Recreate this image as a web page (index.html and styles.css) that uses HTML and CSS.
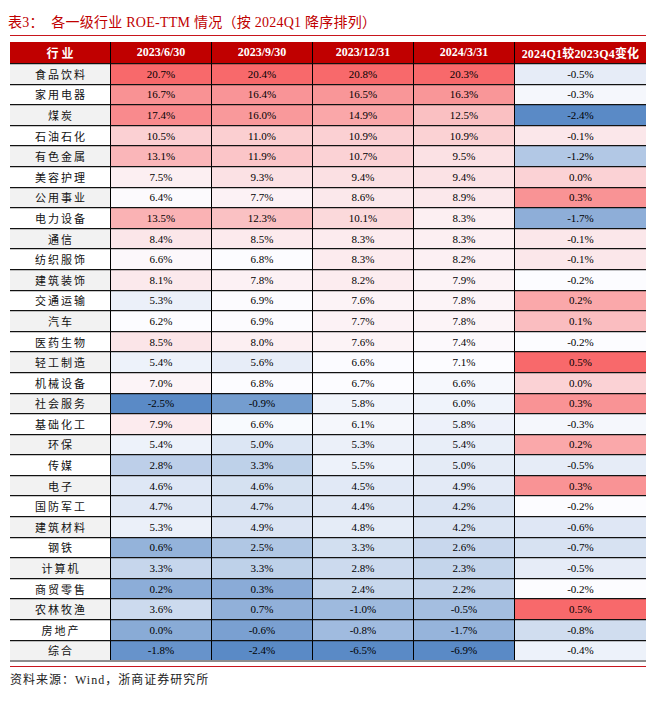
FILE: index.html
```html
<!DOCTYPE html>
<html lang="zh-CN">
<head>
<meta charset="utf-8">
<title>各一级行业 ROE-TTM 情况</title>
<link rel="stylesheet" href="styles.css">
</head>
<body>
<div class="title">表3：&nbsp;&nbsp;各一级行业 ROE-TTM 情况（按 2024Q1 降序排列）</div>
<div class="rule"></div>
<table class="roe" id="roe">
<thead>
<tr><th class="ind">行业</th><th>2023/6/30</th><th>2023/9/30</th><th>2023/12/31</th><th>2024/3/31</th><th class="chg">2024Q1较2023Q4变化</th></tr>
</thead>
<tbody>
<tr><td class="ind">食品饮料</td><td>20.7%</td><td>20.4%</td><td>20.8%</td><td>20.3%</td><td>-0.5%</td></tr>
<tr><td class="ind">家用电器</td><td>16.7%</td><td>16.4%</td><td>16.5%</td><td>16.3%</td><td>-0.3%</td></tr>
<tr><td class="ind">煤炭</td><td>17.4%</td><td>16.0%</td><td>14.9%</td><td>12.5%</td><td>-2.4%</td></tr>
<tr><td class="ind">石油石化</td><td>10.5%</td><td>11.0%</td><td>10.9%</td><td>10.9%</td><td>-0.1%</td></tr>
<tr><td class="ind">有色金属</td><td>13.1%</td><td>11.9%</td><td>10.7%</td><td>9.5%</td><td>-1.2%</td></tr>
<tr><td class="ind">美容护理</td><td>7.5%</td><td>9.3%</td><td>9.4%</td><td>9.4%</td><td>0.0%</td></tr>
<tr><td class="ind">公用事业</td><td>6.4%</td><td>7.7%</td><td>8.6%</td><td>8.9%</td><td>0.3%</td></tr>
<tr><td class="ind">电力设备</td><td>13.5%</td><td>12.3%</td><td>10.1%</td><td>8.3%</td><td>-1.7%</td></tr>
<tr><td class="ind">通信</td><td>8.4%</td><td>8.5%</td><td>8.3%</td><td>8.3%</td><td>-0.1%</td></tr>
<tr><td class="ind">纺织服饰</td><td>6.6%</td><td>6.8%</td><td>8.3%</td><td>8.2%</td><td>-0.1%</td></tr>
<tr><td class="ind">建筑装饰</td><td>8.1%</td><td>7.8%</td><td>8.2%</td><td>7.9%</td><td>-0.2%</td></tr>
<tr><td class="ind">交通运输</td><td>5.3%</td><td>6.9%</td><td>7.6%</td><td>7.8%</td><td>0.2%</td></tr>
<tr><td class="ind">汽车</td><td>6.2%</td><td>6.9%</td><td>7.7%</td><td>7.8%</td><td>0.1%</td></tr>
<tr><td class="ind">医药生物</td><td>8.5%</td><td>8.0%</td><td>7.6%</td><td>7.4%</td><td>-0.2%</td></tr>
<tr><td class="ind">轻工制造</td><td>5.4%</td><td>5.6%</td><td>6.6%</td><td>7.1%</td><td>0.5%</td></tr>
<tr><td class="ind">机械设备</td><td>7.0%</td><td>6.8%</td><td>6.7%</td><td>6.6%</td><td>0.0%</td></tr>
<tr><td class="ind">社会服务</td><td>-2.5%</td><td>-0.9%</td><td>5.8%</td><td>6.0%</td><td>0.3%</td></tr>
<tr><td class="ind">基础化工</td><td>7.9%</td><td>6.6%</td><td>6.1%</td><td>5.8%</td><td>-0.3%</td></tr>
<tr><td class="ind">环保</td><td>5.4%</td><td>5.0%</td><td>5.3%</td><td>5.4%</td><td>0.2%</td></tr>
<tr><td class="ind">传媒</td><td>2.8%</td><td>3.3%</td><td>5.5%</td><td>5.0%</td><td>-0.5%</td></tr>
<tr><td class="ind">电子</td><td>4.6%</td><td>4.6%</td><td>4.5%</td><td>4.9%</td><td>0.3%</td></tr>
<tr><td class="ind">国防军工</td><td>4.7%</td><td>4.7%</td><td>4.4%</td><td>4.2%</td><td>-0.2%</td></tr>
<tr><td class="ind">建筑材料</td><td>5.3%</td><td>4.9%</td><td>4.8%</td><td>4.2%</td><td>-0.6%</td></tr>
<tr><td class="ind">钢铁</td><td>0.6%</td><td>2.5%</td><td>3.3%</td><td>2.6%</td><td>-0.7%</td></tr>
<tr><td class="ind">计算机</td><td>3.3%</td><td>3.3%</td><td>2.8%</td><td>2.3%</td><td>-0.5%</td></tr>
<tr><td class="ind">商贸零售</td><td>0.2%</td><td>0.3%</td><td>2.4%</td><td>2.2%</td><td>-0.2%</td></tr>
<tr><td class="ind">农林牧渔</td><td>3.6%</td><td>0.7%</td><td>-1.0%</td><td>-0.5%</td><td>0.5%</td></tr>
<tr><td class="ind">房地产</td><td>0.0%</td><td>-0.6%</td><td>-0.8%</td><td>-1.7%</td><td>-0.8%</td></tr>
<tr><td class="ind">综合</td><td>-1.8%</td><td>-2.4%</td><td>-6.5%</td><td>-6.9%</td><td>-0.4%</td></tr>
</tbody>
</table>
<div class="rule rule-bottom"></div>
<div class="source">资料来源：Wind，浙商证券研究所</div>
<script src="script.js"></script>
</body>
</html>
```

FILE: styles.css
```css
html, body {
  margin: 0;
  padding: 0;
  background: #ffffff;
}

body {
  font-family: "Liberation Serif", "Noto Sans CJK SC", serif;
  color: #000;
}

.title {
  padding: 14px 0 3px 8px;
  height: 18px;
  line-height: 18px;
  font-size: 14px;
  letter-spacing: 0.25px;
  color: #c00000;
  white-space: nowrap;
}

.rule {
  margin-left: 10px;
  height: 1px;
  background: #c8161d;
}

.roe {
  margin: 6px 0 0 10px;
  width: 636px;
  border-collapse: separate;
  border-spacing: 0;
  table-layout: fixed;
  border-bottom: 2px solid #8c8c8c;
}

.roe th,
.roe td {
  padding: 0;
  text-align: center;
  vertical-align: middle;
  white-space: nowrap;
}

.roe th {
  height: 21px;
  background: #c00000;
  color: #fff;
  font-weight: bold;
  font-size: 12px;
  border-left: 1px solid #000;
}

.roe th.ind {
  width: 100px;
  border-left: 0;
  letter-spacing: 3px;
  text-indent: 3px;
}

.roe th.chg {
  width: 131px;
  letter-spacing: 0.2px;
}

.roe tbody tr {
  height: 20.6px;
}

.roe td {
  font-size: 11px;
  border-top: 1px solid #111;
  border-left: 1px solid #000;
  box-shadow: inset 0 1px 0 rgba(0, 0, 0, 0.22);
}

.roe td.ind {
  border-left: 0;
  letter-spacing: 2px;
  text-indent: 2px;
  font-size: 11px;
  color: #111;
}

.roe tbody tr:nth-child(odd) td.ind {
  background: #f2f2f2;
}

.roe tbody tr:nth-child(even) td.ind {
  background: #ffffff;
}

.rule-bottom {
  margin-top: 4px;
}

.source {
  margin: 5px 0 0 10px;
  font-size: 12px;
  line-height: 16px;
  letter-spacing: 1px;
  color: #222;
}
```

FILE: script.js
```js
(function () {
  var table = document.getElementById('roe');
  var rows = table.tBodies[0].rows;
  var RED = [248, 105, 107];
  var MID = [252, 252, 255];
  var BLUE = [90, 138, 198];

  function mix(a, b, t) {
    return 'rgb(' + a.map(function (v, i) {
      return Math.round(v + (b[i] - v) * t);
    }).join(',') + ')';
  }

  for (var c = 1; c <= 5; c++) {
    var vals = [];
    for (var r = 0; r < rows.length; r++) {
      vals.push(parseFloat(rows[r].cells[c].textContent));
    }
    var sorted = vals.slice().sort(function (a, b) { return a - b; });
    var min = sorted[0];
    var max = sorted[sorted.length - 1];
    var pos = (sorted.length - 1) * 0.5;
    var lo = Math.floor(pos);
    var mid = sorted[lo] + (sorted[Math.ceil(pos)] - sorted[lo]) * (pos - lo);
    for (var k = 0; k < rows.length; k++) {
      var v = vals[k];
      var color;
      if (v >= mid) {
        color = mix(MID, RED, max === mid ? 0 : (v - mid) / (max - mid));
      } else {
        color = mix(MID, BLUE, (mid - v) / (mid - min));
      }
      rows[k].cells[c].style.backgroundColor = color;
    }
  }
})();
```
